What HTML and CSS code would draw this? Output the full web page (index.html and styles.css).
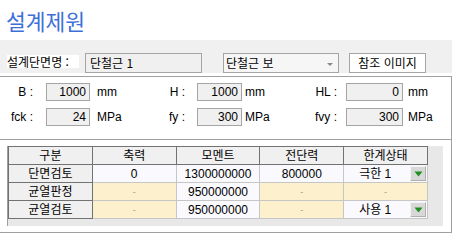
FILE: index.html
```html
<!DOCTYPE html>
<html lang="ko">
<head>
<meta charset="utf-8">
<link rel="stylesheet" href="styles.css">
</head>
<body>
<div class="page">
  <h1 class="title">설계제원</h1>
  <div class="bar">
    <span class="name-label">설계단면명 :</span>
    <span class="name-input">단철근 1</span>
    <span class="select">
      <span class="select-text">단철근 보</span>
      <span class="select-arrow"></span>
    </span>
    <span class="btn">참조 이미지</span>
  </div>
  <div class="params">
    <div class="prow">
      <span class="lab l1">B :</span><span class="box b1">1000</span><span class="unit u1">mm</span>
      <span class="lab l2">H :</span><span class="box b2">1000</span><span class="unit u2">mm</span>
      <span class="lab l3">HL :</span><span class="box b3">0</span><span class="unit u3">mm</span>
    </div>
    <div class="prow">
      <span class="lab l1">fck :</span><span class="box b1">24</span><span class="unit u1">MPa</span>
      <span class="lab l2">fy :</span><span class="box b2">300</span><span class="unit u2">MPa</span>
      <span class="lab l3">fvy :</span><span class="box b3">300</span><span class="unit u3">MPa</span>
    </div>
  </div>
  <div class="gridpanel">
    <div class="gridbox">
      <table class="grid">
        <tr>
          <th>구분</th><th>축력</th><th>모멘트</th><th>전단력</th><th>한계상태</th>
        </tr>
        <tr>
          <th>단면검토</th>
          <td class="w">0</td>
          <td class="w">1300000000</td>
          <td class="w">800000</td>
          <td class="w combo"><span class="combo-text">극한 1</span><span class="dd"><svg width="9" height="6" viewBox="0 0 9 6"><path d="M0.5 0.5 H8.5 L4.5 5.5 Z" fill="#1f8f1f"/></svg></span></td>
        </tr>
        <tr>
          <th>균열판정</th>
          <td class="c dash">-</td>
          <td class="w">950000000</td>
          <td class="c dash">-</td>
          <td class="c dash">-</td>
        </tr>
        <tr>
          <th>균열검토</th>
          <td class="c dash">-</td>
          <td class="w">950000000</td>
          <td class="c dash">-</td>
          <td class="w combo"><span class="combo-text">사용 1</span><span class="dd"><svg width="9" height="6" viewBox="0 0 9 6"><path d="M0.5 0.5 H8.5 L4.5 5.5 Z" fill="#1f8f1f"/></svg></span></td>
        </tr>
      </table>
    </div>
  </div>
</div>
</body>
</html>
```
FILE: styles.css
```css
* { box-sizing: border-box; }
html, body { margin: 0; padding: 0; background: #ffffff; }
body {
  width: 452px;
  height: 234px;
  overflow: hidden;
  font-family: "Liberation Sans", "Noto Sans CJK KR", sans-serif;
  font-size: 12px;
  color: #000;
}
.page { width: 452px; }
.title {
  margin: 0;
  height: 40px;
  padding: 8px 0 0 6px;
  font-family: "Noto Sans CJK KR", sans-serif;
  font-weight: 400;
  font-size: 21.5px;
  line-height: 26px;
  color: #3c6fd8;
}
.bar {
  height: 33px;
  background: #f0f0f0;
  display: flex;
  align-items: flex-start;
  padding: 13px 0 0 7px;
}
.name-label {
  width: 72px;
  height: 13px;
  background: #fff;
  line-height: 13px;
  font-size: 12px;
  margin-top: 2px;
  white-space: nowrap;
  font-family: "Noto Sans CJK KR", sans-serif;
}
.name-input {
  margin-left: 6px;
  width: 117px;
  height: 20px;
  border: 1px solid #a5a5a5;
  background: #f0f0f0;
  padding-left: 4px;
  line-height: 18px;
  font-family: "Noto Sans CJK KR", sans-serif;
}
.select {
  margin-left: 21px;
  width: 116px;
  height: 20px;
  border: 1px solid #a5a5a5;
  background: #f6f6f6;
  display: flex;
  align-items: center;
  justify-content: space-between;
  padding: 0 5px 0 2px;
}
.select-text { font-family: "Noto Sans CJK KR", sans-serif; line-height: 18px; }
.select-arrow {
  width: 0; height: 0;
  border-left: 3px solid transparent;
  border-right: 3px solid transparent;
  border-top: 3px solid #8a8a8a;
  margin-top: 2px;
}
.btn {
  margin-left: 10px;
  width: 77px;
  height: 20px;
  border: 1px solid #a5a5a5;
  background: #fff;
  text-align: center;
  line-height: 18px;
  font-family: "Noto Sans CJK KR", sans-serif;
}
.params {
  margin-top: 3px;
  height: 63px;
  border-top: 1px solid #a0a0a0;
  border-right: 1px solid #a0a0a0;
  padding-top: 6px;
}
.prow {
  display: flex;
  align-items: center;
  height: 18px;
  margin-bottom: 7px;
}
.lab { text-align: right; font-size: 12px; }
.l1 { width: 33px; }
.l2 { width: 35px; }
.l3 { width: 37px; }
.box {
  height: 18px;
  border: 1px solid #a5a5a5;
  background: #f0f0f0;
  text-align: right;
  padding-right: 3px;
  line-height: 16px;
}
.b1 { margin-left: 13px; width: 44px; }
.b2 { margin-left: 12px; width: 45px; }
.b3 { margin-left: 9px; width: 57px; }
.unit { font-size: 12px; }
.u1 { margin-left: 7px; width: 53px; }
.u2 { margin-left: 3px; width: 55px; }
.u3 { margin-left: 5px; }
.gridpanel {
  height: 94px;
  border-top: 1px solid #a0a0a0;
  border-right: 1px solid #a0a0a0;
  border-bottom: 1px solid #a0a0a0;
  padding: 6px 0 0 7px;
}
.gridbox {
  width: 436px;
  height: 80px;
  background: #e8e8e8;
  border-left: 1px solid #a0a0a0;
}
.grid {
  border-collapse: collapse;
  table-layout: fixed;
  width: 420px;
}
.grid th, .grid td {
  width: 80px;
  height: 18px;
  padding: 0;
  text-align: center;
  font-weight: 400;
  line-height: 16px;
  white-space: nowrap;
  font-family: "Liberation Sans", "Noto Sans CJK KR", sans-serif;
}
.grid th {
  background: #f0f0f0;
  border: 1px solid #727272;
}
.grid td {
  border: 1px solid #c6c6c6;
}
.grid td.w { background: #f9f9fe; }
.grid td.c { background: #fdf0cd; }
.grid td.dash { color: #9a9a9a; font-size: 9px; }
.grid td.combo { position: relative; text-align: left; }
.combo-text { display: inline-block; width: 62px; text-align: center; }
.dd {
  position: absolute;
  right: 1px;
  top: 1px;
  width: 16px;
  height: 15px;
  background: #d8d8d8;
  border: 1px solid #b0b0b0;
  border-top-color: #f4f4f4;
  border-left-color: #f4f4f4;
  display: flex;
  align-items: center;
  justify-content: center;
}
.dd svg { display: block; }
```
